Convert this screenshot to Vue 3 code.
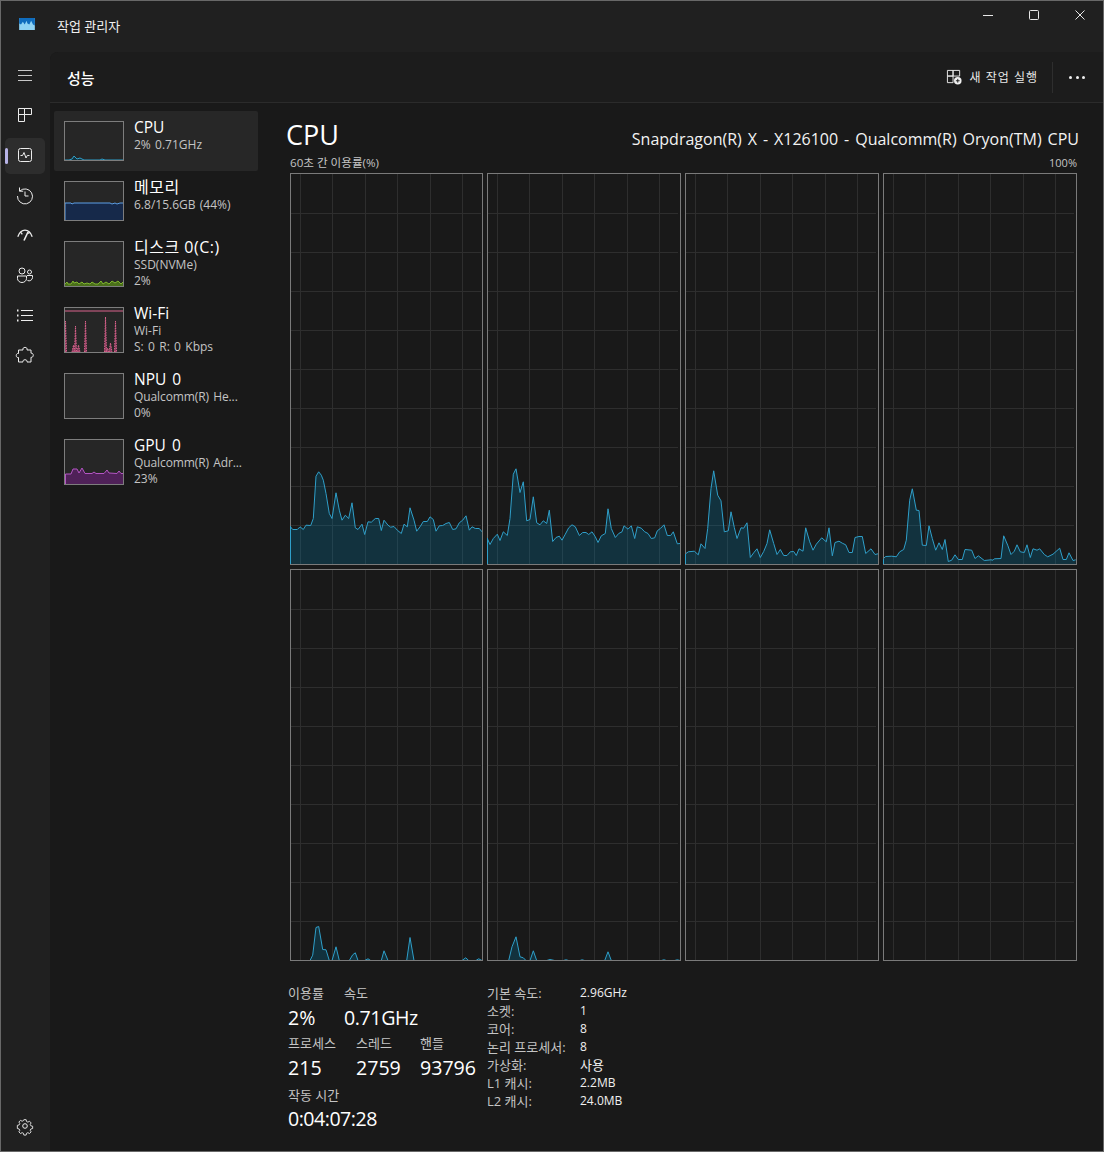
<script setup>
// coordinates traced from the chart, written in 3x units
const toChart = (raw, left, bottom) =>
  raw.map(([x, y]) => [(x - left) / 3 - 1, 390.5 - (bottom - y) / 3]);

const pairs = (s) =>
  s.trim().split(/\s+/).map((p) => p.split(",").map(Number));

const c1 = pairs("16,228 24,238 38,238 46,230 56,238 64,225 78,226 86,205 94,78 102,65 110,75 116,90 124,130 134,190 142,205 154,128 164,180 172,210 182,195 192,205 202,158 212,233 220,238 232,222 240,253 250,215 260,216 272,205 282,205 290,241 298,210 310,225 318,231 328,229 338,240 350,250 358,222 368,230 376,173 388,210 396,243 406,230 416,214 428,214 436,200 446,208 454,243 464,227 474,226 484,220 494,217 504,238 514,236 524,218 534,210 544,197 554,240 562,230 572,235 584,235 592,245");
const c2 = pairs("607,263 616,283 626,265 638,252 646,271 656,245 668,256 676,205 686,72 694,56 706,127 716,95 726,212 736,208 746,140 756,218 766,224 776,212 786,220 794,180 804,274 814,262 824,258 832,270 842,252 852,233 862,224 872,230 884,256 894,247 904,247 912,253 922,245 932,260 940,277 950,257 962,250 970,176 980,235 992,262 1002,250 1012,245 1018,227 1030,237 1040,227 1050,265 1058,230 1070,234 1080,245 1090,250 1100,265 1110,263 1118,242 1128,234 1138,224 1148,256 1158,256 1166,245 1178,281 1186,280");
const c3 = pairs("16,312 26,305 44,303 56,314 64,281 76,295 84,235 94,115 102,62 114,135 124,152 134,245 146,242 154,185 164,232 172,265 184,233 192,234 202,218 212,322 222,308 232,296 242,322 252,304 262,280 270,239 282,280 292,313 302,298 312,316 322,316 332,305 342,304 350,316 358,296 370,303 378,233 390,275 400,300 410,282 426,263 440,275 448,233 458,317 466,277 478,273 488,279 498,284 508,307 518,307 526,262 538,259 548,259 558,310 574,296 586,313 595,311");
const c4 = pairs("610,326 618,319 636,318 650,320 660,305 672,298 680,270 690,150 698,116 710,180 718,181 728,285 740,286 748,227 758,265 768,300 778,278 788,298 796,268 806,334 816,330 826,314 836,328 848,328 856,298 876,300 886,325 896,317 914,331 934,329 940,330 944,326 964,325 972,257 984,285 994,313 1004,303 1012,284 1022,305 1034,307 1042,284 1052,322 1060,296 1072,300 1080,296 1094,313 1104,320 1120,312 1140,294 1150,328 1160,328 1168,308 1180,331 1188,329");
const c5 = pairs("76,151 84,135 94,52 102,49 114,118 124,119 134,151 142,151 154,110 164,151 194,151 204,134 212,128 220,151 240,151 250,146 258,151 290,151 298,122 310,151 366,151 376,82 388,151 532,151 543,143 552,151 574,151 582,146 592,151");
const c6 = pairs("672,151 682,110 694,80 706,140 716,143 724,151 736,151 746,122 756,151 786,151 796,148 810,151 836,151 844,149 852,151 886,151 892,149 900,151 960,151 970,125 980,151 1130,151 1138,149 1145,151 1170,151 1178,149 1186,151");

const str = (pts) => pts.map(([x, y]) => x.toFixed(1) + "," + y.toFixed(1)).join(" ");
const makeChart = (raw, left, bottom, closed) => {
  const pts = toChart(raw, left, bottom);
  if (!pts.length) return { line: "", area: "", edge: 0 };
  const last = pts[pts.length - 1][0];
  const first = pts[0][0];
  const line = closed ? `${first},391 ${str(pts)}` : str(pts);
  // the first sample starts on the border, so the left edge is lit up to it
  const edge = closed ? 390 - pts[0][1] : 0;
  return { line, area: `${first},391 ${str(pts)} ${last},391`, edge };
};

const charts = [
  makeChart(c1, 16, 343, true),
  makeChart(c2, 607, 343, true),
  makeChart(c3, 16, 343, true),
  makeChart(c4, 610, 343, true),
  makeChart(c5, 16, 151, false),
  makeChart(c6, 607, 151, false),
  makeChart([], 0, 0),
  makeChart([], 0, 0),
];

const vLines = [9.5, 41.5, 74.5, 106.5, 139.5, 171.5];
const hLines = [1, 2, 3, 4, 5, 6, 7, 8, 9].map((k) => k * 39 + 0.5);

const hasKo = (s) => /[가-힣]/.test(s);

const sideItems = [
  {
    title: "CPU", subs: ["2% 0.71GHz"], h: 40, active: true,
    line: "0,38 4,38 7,37 9,34 12,37 15,36 19,38 35,38 37,37 40,38 58,38",
    stroke: "#2f9fc9", fill: "#12333f",
  },
  {
    title: "메모리", subs: ["6.8/15.6GB (44%)"], h: 40,
    line: "0,38 0,21 6,21 7,22 9,21 45,21 47,22 50,21 52,22 55,21 58,21",
    stroke: "#5c9fe6", fill: "#16294a",
  },
  {
    title: "디스크 0(C:)", subs: ["SSD(NVMe)", "2%"], h: 46,
    line: "0,42 2,40 3,42 6,42 8,39 9,41 12,40 14,42 17,40 19,42 22,41 25,42 27,40 30,42 33,42 36,39 38,42 41,40 44,42 47,39 50,41 53,39 56,42 58,40",
    stroke: "#7fb62d", fill: "#4a6f1a",
  },
  {
    title: "Wi-Fi", subs: ["Wi-Fi", "S: 0 R: 0 Kbps"], h: 46, wifi: true,
    line: "0,3 58,3",
    stroke: "#d9638c", fill: "none",
  },
  { title: "NPU 0", subs: ["Qualcomm(R) He...", "0%"], h: 46, line: "", stroke: "none", fill: "none" },
  {
    title: "GPU 0", subs: ["Qualcomm(R) Adr...", "23%"], h: 46,
    line: "0.5,44 0.5,34 6,34 8,29 12,29 14,33 17,28 20,33.5 27,33.5 29,32 31,33.5 39,33.5 42,30 44,33 52,33.5 54,31 56,33.5 58,33.5",
    stroke: "#b455c4", fill: "#4f2158",
  },
];

const wifiSpikes = [
  "0,44 0.5,13 1.5,44",
  "9.5,44 10.5,18 11.5,44",
  "19.5,44 20.5,13 21.5,44",
  "39.5,44 40.5,9 41.5,44",
  "49.5,44 50.5,13 51.5,44",
  "7,44 8.5,37 10,44",
  "12,44 13.5,37 15,44",
  "41,44 42.5,40 44,44",
  "44,44 45.5,35 47,44",
];

const specs = [
  ["기본 속도:", "2.96GHz"],
  ["소켓:", "1"],
  ["코어:", "8"],
  ["논리 프로세서:", "8"],
  ["가상화:", "사용"],
  ["L1 캐시:", "2.2MB"],
  ["L2 캐시:", "24.0MB"],
];
</script>

<template>
  <div class="window">
    <header class="titlebar">
      <svg class="logo" width="16" height="12" viewBox="0 0 17 13">
        <rect width="17" height="13" fill="#8fd3f4" />
        <path d="M0 0h17v8l-2-1-2-4-2 4-2-1-1-3-2 4-2-3-2 3-2-1z" fill="#0f6cbd" />
      </svg>
      <span class="app-name">작업 관리자</span>
      <div class="win-btns">
        <svg width="12" height="12" viewBox="0 0 12 12"><path d="M1 6.5h10" stroke="#e8e8e8" /></svg>
        <svg width="12" height="12" viewBox="0 0 12 12"><rect x="1.5" y="1.5" width="9" height="9" rx="1" fill="none" stroke="#e8e8e8" /></svg>
        <svg width="12" height="12" viewBox="0 0 12 12"><path d="M1.5 1.5l9 9M10.5 1.5l-9 9" stroke="#e8e8e8" /></svg>
      </div>
    </header>

    <div class="body">
      <nav class="nav">
        <div class="nav-item">
          <svg width="20" height="20" viewBox="0 0 20 20" class="ico"><path d="M3 5.5h14M3 10.5h14M3 15.5h14" stroke="#c8c8c8" /></svg>
        </div>
        <div class="nav-item">
          <svg width="20" height="20" viewBox="0 0 20 20" class="ico"><path d="M3.5 3.5h6v6h-6zM9.5 3.5h7v6h-7zM3.5 9.5h6v7h-6z" /></svg>
        </div>
        <div class="nav-item selected">
          <svg width="20" height="20" viewBox="0 0 20 20" class="ico"><rect x="3.5" y="3.5" width="13" height="13" rx="2" /><path d="M5.5 10.5h2l1.5-3 2 5.500 1.300-2.500h2.200" /></svg>
        </div>
        <div class="nav-item">
          <svg width="20" height="20" viewBox="0 0 20 20" class="ico"><path d="M4.800 6A7.500 7.500 0 1 1 2.500 11M4.500 2.500V6.200H8.200M10 6.500V11h3.500" /></svg>
        </div>
        <div class="nav-item">
          <svg width="20" height="20" viewBox="0 0 20 20" class="ico"><path d="M2.800 11.700C4.500 7 7 5.200 10 5.200s5.500 1.800 7.200 6.500M5.700 7l1.600 2.400M14.500 7l-1.200 1.600" stroke-width="1.300" /><path d="M9 15.500l4-8.500" stroke-width="1.600" /></svg>
        </div>
        <div class="nav-item">
          <svg width="20" height="20" viewBox="0 0 20 20" class="ico"><circle cx="7" cy="6" r="3" /><circle cx="14.500" cy="7" r="2" /><path d="M2.500 11h9v2.500a4.500 4 0 0 1-9 0zM12 10.500h5.500v2a3.500 3.500 0 0 1-5 3" /></svg>
        </div>
        <div class="nav-item">
          <svg width="20" height="20" viewBox="0 0 20 20" class="ico"><path d="M6 5.500h12M6 10.500h12M6 15.500h12" /><path d="M2 5.500h1.500M2 10.500h1.500M2 15.500h1.500" stroke-width="2" /></svg>
        </div>
        <div class="nav-item">
          <svg width="20" height="20" viewBox="0 0 20 20" class="ico puzzle"><path d="M8 5C6.800 1.500 13.200 1.500 12 5H16V8.200C19 7.500 19 13 16 12.300V17H12C13 14 7 14 8 17H3.500V12.500C.500 13.300 .500 7.800 3.500 8.500V5Z" /></svg>
        </div>
        <div class="nav-item gear">
          <svg width="20" height="20" viewBox="0 0 20 20" class="ico"><circle cx="10" cy="10" r="2.300" /><path d="M8.700 3h2.600l.4 2 1.500.7 1.800-1 1.800 1.900-1 1.700.7 1.500 2 .5v2.500l-2 .5-.7 1.500 1 1.700-1.800 1.900-1.800-1-1.500.7-.4 2H8.700l-.4-2-1.500-.7-1.800 1-1.800-1.900 1-1.700-.7-1.500-2-.5V9.300l2-.5.7-1.500-1-1.700 1.800-1.900 1.800 1 1.500-.7z" transform="translate(1 1) scale(.9)" /></svg>
        </div>
      </nav>

      <main class="content">
        <div class="page-head">
          <h1 class="page-title">성능</h1>
          <div class="actions">
            <svg width="16" height="16" viewBox="0 0 17 17" class="ico run-ico">
              <path d="M1.500 1.500h6v6h-6zM7.500 1.500h7v6h-7zM1.500 7.500h6v7h-6z" />
              <circle cx="12.500" cy="12.500" r="4" fill="#f0f0f0" stroke="none" />
              <path d="M10.500 12.500h4M12.500 10.500v4" stroke="#1c1c1c" />
            </svg>
            <span class="run-text">새 작업 실행</span>
            <span class="sep"></span>
            <span class="more"><i></i><i></i><i></i></span>
          </div>
        </div>

        <div class="perf">
          <aside class="side">
            <div v-for="item in sideItems" :key="item.title" class="side-row" :class="{ active: item.active }">
              <div class="thumb" :style="{ height: item.h + 'px' }">
                <svg width="58" :height="item.h - 2">
                  <template v-if="item.line">
                    <polygon v-if="item.fill !== 'none'" :points="`0,${item.h} ${item.line} 58,${item.h}`" :fill="item.fill" />
                    <polyline :points="item.line" fill="none" :stroke="item.stroke" />
                  </template>
                  <template v-if="item.wifi">
                    <polygon v-for="s in wifiSpikes" :key="s" :points="s" fill="#8f3f63" stroke="#d9638c" stroke-dasharray="1.500 1" />
                  </template>
                </svg>
              </div>
              <div class="side-text">
                <div class="side-title" :class="{ ko: hasKo(item.title) }">{{ item.title }}</div>
                <div v-for="s in item.subs" :key="s" class="side-sub" :class="{ tight: s.startsWith('Qualcomm') }">{{ s }}</div>
              </div>
            </div>
          </aside>

          <section class="detail">
            <div class="detail-head">
              <h2 class="cpu-title">CPU</h2>
              <div class="cpu-name">Snapdragon(R) X - X126100 - Qualcomm(R) Oryon(TM) CPU</div>
            </div>
            <div class="chart-label">
              <span>60초 간 이용률(%)</span>
              <span class="pct">100%</span>
            </div>
            <div class="charts">
              <div v-for="(c, i) in charts" :key="i" class="chart">
                <svg width="100%" height="100%">
                  <line v-for="x in vLines" :key="'v' + x" :x1="x" :x2="x" y1="0" y2="390" stroke="#2e2e2e" />
                  <line v-for="y in hLines" :key="'h' + y" x1="0" x2="190" :y1="y" :y2="y" stroke="#2e2e2e" />
                  <template v-if="c.line">
                    <polygon :points="c.area" fill="#0081b1" fill-opacity=".25" />
                    <polyline :points="c.line" fill="none" stroke="#2f9fc9" stroke-linejoin="round" />
                  </template>
                </svg>
                <span v-if="c.edge" class="edge" :style="{ height: c.edge + 'px' }"></span>
              </div>
            </div>

            <div class="stats">
              <div class="stats-left">
                <div class="stat-row r1">
                  <div class="stat w56"><div class="s-label">이용률</div><div class="s-value">2%</div></div>
                  <div class="stat"><div class="s-label">속도</div><div class="s-value narrow">0.71GHz</div></div>
                </div>
                <div class="stat-row r2">
                  <div class="stat w68"><div class="s-label">프로세스</div><div class="s-value">215</div></div>
                  <div class="stat w64"><div class="s-label">스레드</div><div class="s-value">2759</div></div>
                  <div class="stat"><div class="s-label">핸들</div><div class="s-value">93796</div></div>
                </div>
                <div class="stat-row">
                  <div class="stat"><div class="s-label">작동 시간</div><div class="s-value uptime">0:04:07:28</div></div>
                </div>
              </div>
              <div class="specs">
                <template v-for="row in specs" :key="row[0]">
                  <span class="spec-k">{{ row[0] }}</span>
                  <span class="spec-v" :class="{ ko: hasKo(row[1]) }">{{ row[1] }}</span>
                </template>
              </div>
            </div>
          </section>
        </div>
      </main>
    </div>
  </div>
</template>

<style>
html,
body {
  margin: 0;
  background: #202020;
}
</style>

<style scoped>
.window {
  box-sizing: border-box;
  width: 1104px;
  height: 1152px;
  display: flex;
  flex-direction: column;
  background: #202020;
  border: 1px solid #686868;
  color: #fff;
  font-family: "Open Sans", "Noto Sans CJK KR", sans-serif;
  overflow: hidden;
}

.titlebar {
  height: 51px;
  flex: none;
  display: flex;
  align-items: flex-start;
}

.logo {
  margin: 17px 0 0 18px;
}

.app-name {
  margin: 16px 0 0 22px;
  font-size: 13px;
  line-height: 18px;
  color: #f0f0f0;
}

.win-btns {
  margin: 8px 0 0 auto;
  display: flex;
  gap: 34px;
  padding-right: 17px;
}

.body {
  flex: 1;
  display: flex;
  min-height: 0;
}

.nav {
  width: 49px;
  flex: none;
  display: flex;
  flex-direction: column;
  padding: 4px 0 4px;
  box-sizing: border-box;
}

.nav-item {
  height: 36px;
  margin: 2px 5px 2px 4px;
  border-radius: 5px;
  display: flex;
  align-items: center;
  justify-content: center;
  position: relative;
}

.nav-item svg {
  margin-bottom: 2px;
}

.nav-item.selected {
  background: #2d2d2d;
}

.nav-item.selected::before {
  content: "";
  position: absolute;
  left: 0;
  top: 10px;
  width: 3px;
  height: 16px;
  border-radius: 2px;
  background: #b7b3e6;
}

.nav-item.gear {
  margin-top: auto;
}

.ico {
  fill: none;
  stroke: #ececec;
  stroke-width: 1;
}

.puzzle {
  stroke-linejoin: round;
}

.content {
  flex: 1;
  min-width: 0;
  display: flex;
  flex-direction: column;
  background: #191919;
  border-top-left-radius: 8px;
}

.page-head {
  height: 50px;
  flex: none;
  display: flex;
  align-items: center;
  justify-content: space-between;
  padding: 0 18px 0 17px;
  background: #1c1c1c;
  border-bottom: 1px solid #2b2b2b;
  border-top-left-radius: 8px;
}

.page-title {
  margin: 0;
  font-size: 15px;
  font-weight: 500;
}

.actions {
  display: flex;
  align-items: center;
}

.run-ico {
  margin-right: 8px;
}

.run-text {
  font-size: 12px;
  color: #e8e8e8;
  letter-spacing: 1px;
}

.sep {
  width: 1px;
  height: 31px;
  background: #2e2e2e;
  margin: 0 16px 0 14px;
}

.more {
  display: flex;
  gap: 3.5px;
}

.more i {
  width: 3px;
  height: 3px;
  border-radius: 50%;
  background: #f0f0f0;
}

.perf {
  flex: 1;
  display: flex;
  min-height: 0;
}

.side {
  width: 218px;
  flex: none;
  box-sizing: border-box;
  padding: 8px 10px 0 4px;
}

.side-row {
  display: flex;
  padding: 10px 0 10px 10px;
  border-radius: 2px;
}

.side-row.active {
  background: #272727;
}

.thumb {
  width: 60px;
  box-sizing: border-box;
  flex: none;
  border: 1px solid #7d7d7d;
  background: #262626;
}

.thumb svg {
  display: block;
}

.side-text {
  height: 0;
  margin: -4px 0 0 10px;
  white-space: nowrap;
}

.side-title {
  font-size: 15.5px;
  line-height: 20px;
  word-spacing: 2px;
}

.side-title.ko {
  font-size: 16px;
  letter-spacing: 0.5px;
  word-spacing: 0;
}

.side-sub {
  font-size: 12px;
  line-height: 15.5px;
  color: #c4c4c4;
  word-spacing: 1.2px;
}

.side-sub.tight {
  letter-spacing: -0.1px;
}

.detail {
  flex: 1;
  min-width: 0;
  padding: 14px 24px 0 20px;
}

.detail-head {
  display: flex;
  justify-content: space-between;
  height: 37px;
}

.cpu-title {
  margin: 0 0 0 -2px;
  font-size: 27px;
  line-height: 36px;
  font-weight: 400;
}

.cpu-name {
  margin-top: 11px;
  font-size: 16px;
  line-height: 22px;
  color: #f2f2f2;
  word-spacing: 1.8px;
}

.chart-label {
  display: flex;
  justify-content: space-between;
  margin: 1px 2px 2px;
  font-size: 11.6px;
  line-height: 16px;
  color: #c4c4c4;
}

.pct {
  font-size: 11px;
}

.charts {
  margin: 0 2px;
  display: grid;
  grid-template-columns: 193px 194px 194px 194px;
  grid-template-rows: repeat(2, 392px);
  gap: 4px;
}

.chart {
  box-sizing: border-box;
  border: 1px solid #7a7a7a;
  position: relative;
}

.chart svg {
  display: block;
}

.edge {
  position: absolute;
  left: -1px;
  bottom: 0;
  width: 1px;
  background: #2f9fc9;
}

.stats {
  display: flex;
  margin-top: 24px;
}

.stats-left {
  width: 199px;
  flex: none;
}

.stat-row {
  display: flex;
}

.r1 {
  margin-bottom: 1px;
}

.r2 {
  margin-bottom: 3px;
}

.w56 {
  width: 56px;
}

.w68 {
  width: 68px;
}

.w64 {
  width: 64px;
}

.s-label {
  font-size: 13px;
  line-height: 16px;
  color: #c4c4c4;
}

.s-value {
  margin-top: 1px;
  font-size: 19.6px;
  line-height: 32px;
  color: #fff;
  white-space: nowrap;
}

.narrow {
  letter-spacing: -0.4px;
}

.uptime {
  margin-top: 0;
  letter-spacing: -0.5px;
}

.specs {
  display: grid;
  grid-template-columns: 93px auto;
  grid-auto-rows: 18px;
  align-content: start;
  margin-top: -1px;
  font-size: 12px;
  line-height: 18px;
}

.spec-k {
  font-size: 13px;
  color: #c4c4c4;
  white-space: nowrap;
}

.spec-v {
  color: #f0f0f0;
}

.spec-v.ko {
  font-size: 13px;
}
</style>
